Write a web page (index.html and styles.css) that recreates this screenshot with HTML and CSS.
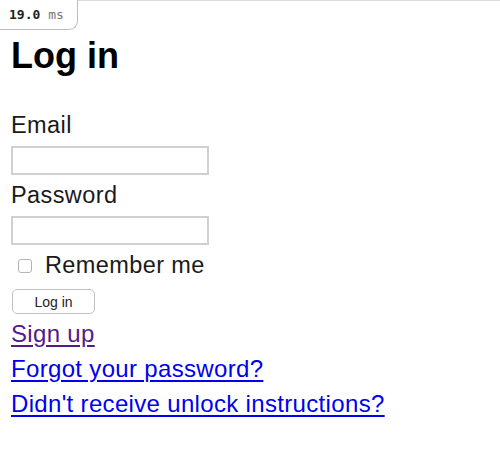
FILE: index.html
```html
<!DOCTYPE html>
<html>
<head>
<meta charset="utf-8">
<link rel="stylesheet" href="styles.css">
</head>
<body>
<div class="profiler"><span class="num">19.0</span> <span class="unit">ms</span></div>
<main class="page">
  <h1 class="title">Log in</h1>
  <form class="form">
    <div class="field">
      <label class="label" for="email">Email</label>
      <input class="input" id="email" type="email">
    </div>
    <div class="field">
      <label class="label" for="password">Password</label>
      <input class="input" id="password" type="password">
    </div>
    <div class="remember">
      <span class="checkbox"></span>
      <label class="remember-label">Remember me</label>
    </div>
    <div class="actions">
      <button class="button" type="button">Log in</button>
    </div>
  </form>
  <div class="links">
    <a class="link visited" href="#">Sign up</a>
    <a class="link" href="#">Forgot your password?</a>
    <a class="link" href="#">Didn't receive unlock instructions?</a>
  </div>
</main>
</body>
</html>
```
FILE: styles.css
```css
html, body {
  margin: 0;
  padding: 0;
  background: #fff;
}
body {
  font-family: "Liberation Sans", Arial, sans-serif;
  color: #000;
  border-top: 1px solid #dcdcdc;
}
.profiler {
  position: absolute;
  top: 0;
  left: 0;
  width: 78px;
  height: 30px;
  box-sizing: border-box;
  border: 1px solid #bdbdbd;
  border-top: none;
  border-left: none;
  border-bottom-right-radius: 9px;
  background: #fff;
  font-family: "DejaVu Sans Mono", monospace;
  font-size: 13px;
  line-height: 30px;
  padding-left: 9px;
  color: #333;
}
.profiler .num { color: #222; font-weight: bold; }
.profiler .unit { color: #777; }
.page {
  padding: 0 11px;
}
.title {
  margin: 35px 0 0;
  font-size: 36px;
  line-height: 40px;
  font-weight: bold;
}
.form {
  display: flex;
  flex-direction: column;
  margin-top: 35px;
}
.field {
  display: flex;
  flex-direction: column;
  align-items: flex-start;
}
.label, .remember-label {
  font-size: 23.5px;
  line-height: 28px;
  letter-spacing: 0.4px;
  color: #1a1a1a;
}
.field .label { height: 28px; }
.input {
  margin: 7px 0 6px;
  width: 198px;
  height: 29px;
  box-sizing: border-box;
  border: 2px solid #d0d0d0;
  padding: 0;
  background: #fff;
}
.remember {
  display: flex;
  align-items: center;
  height: 28px;
}
.checkbox {
  width: 12px;
  height: 12px;
  border: 1px solid #b4b4b4;
  border-radius: 3px;
  margin: 2px 13px 0 7px;
  background: #fff;
}
.actions {
  display: flex;
  margin-top: 10px;
}
.button {
  margin-left: 1px;
  width: 83px;
  height: 25px;
  border: 1px solid #c2c2c2;
  border-radius: 5px;
  background: #fff;
  font-family: "Liberation Sans", Arial, sans-serif;
  font-size: 14px;
  color: #222;
  padding: 0;
}
.links {
  display: flex;
  flex-direction: column;
  align-items: flex-start;
  margin-top: 2px;
}
.link {
  font-size: 24px;
  line-height: 35px;
  letter-spacing: 0.33px;
  color: #0000ee;
  text-decoration: underline;
  text-underline-offset: 3px;
}
.link.visited { color: #551a8b; }
```
